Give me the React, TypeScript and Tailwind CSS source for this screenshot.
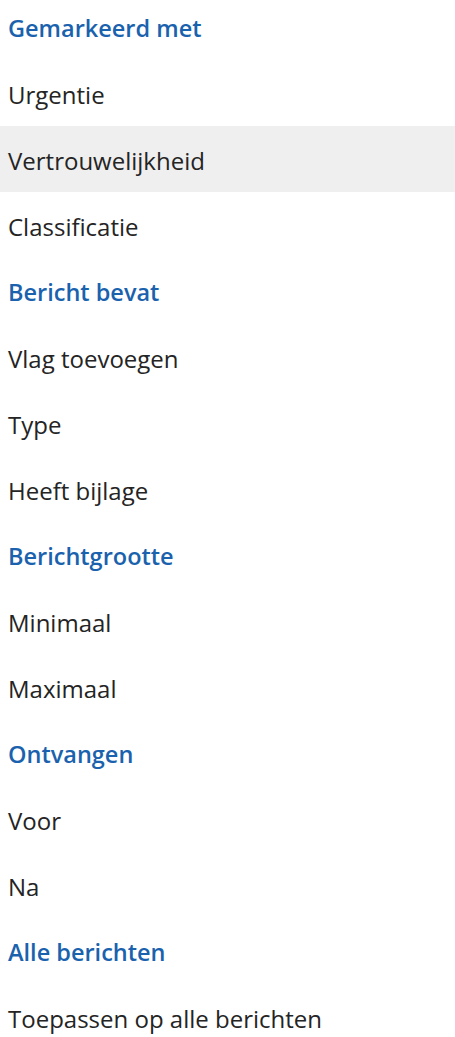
import React from "react";

type Row = { label: string; header?: boolean; active?: boolean };

const rows: Row[] = [
  { label: "Gemarkeerd met", header: true },
  { label: "Urgentie" },
  { label: "Vertrouwelijkheid", active: true },
  { label: "Classificatie" },
  { label: "Bericht bevat", header: true },
  { label: "Vlag toevoegen" },
  { label: "Type" },
  { label: "Heeft bijlage" },
  { label: "Berichtgrootte", header: true },
  { label: "Minimaal" },
  { label: "Maximaal" },
  { label: "Ontvangen", header: true },
  { label: "Voor" },
  { label: "Na" },
  { label: "Alle berichten", header: true },
  { label: "Toepassen op alle berichten" },
];

export default function App() {
  return (
    <div
      className="w-[455px] h-[1037px] overflow-hidden bg-white"
      style={{ fontFamily: '"Open Sans", "Noto Sans", sans-serif' }}
    >
      <div className="-mt-[6px] flex flex-col">
        {rows.map((r, i) => (
          <div
            key={i}
            className={
              "h-[66px] flex items-center pl-2 pt-[3px] " +
              (r.active ? "bg-[#efefef] " : "") +
              (r.header
                ? "text-[23.5px] font-semibold text-[#1a62ad]"
                : "text-[24px] text-[#242424]")
            }
          >
            {r.label}
          </div>
        ))}
      </div>
    </div>
  );
}
